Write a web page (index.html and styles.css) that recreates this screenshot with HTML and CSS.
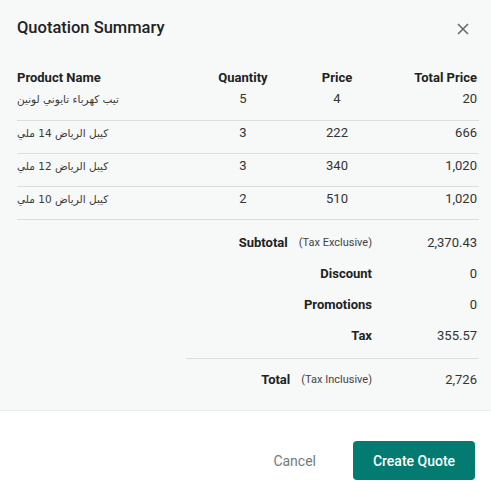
FILE: index.html
```html
<!DOCTYPE html>
<html>
<head>
<meta charset="utf-8">
<link rel="stylesheet" href="styles.css">
</head>
<body>
<div class="dialog">
  <div class="body">
    <div class="head">
      <h1 class="title">Quotation Summary</h1>
      <button class="close" aria-label="Close">
        <svg width="12" height="12" viewBox="0 0 12 12"><path d="M1 1L11 11M11 1L1 11" stroke="#666b6b" stroke-width="1.6" fill="none"/></svg>
      </button>
    </div>
    <div class="table">
      <div class="row hdr">
        <div class="c name">Product Name</div>
        <div class="c mid">Quantity</div>
        <div class="c mid">Price</div>
        <div class="c end">Total Price</div>
      </div>
      <div class="row">
        <div class="c name" dir="rtl">تيب كهرباء تايوني لونين</div>
        <div class="c mid">5</div>
        <div class="c mid">4</div>
        <div class="c end">20</div>
      </div>
      <div class="row">
        <div class="c name" dir="rtl">كيبل الرياض 14 ملي</div>
        <div class="c mid">3</div>
        <div class="c mid">222</div>
        <div class="c end">666</div>
      </div>
      <div class="row">
        <div class="c name" dir="rtl">كيبل الرياض 12 ملي</div>
        <div class="c mid">3</div>
        <div class="c mid">340</div>
        <div class="c end">1,020</div>
      </div>
      <div class="row">
        <div class="c name" dir="rtl">كيبل الرياض 10 ملي</div>
        <div class="c mid">2</div>
        <div class="c mid">510</div>
        <div class="c end">1,020</div>
      </div>
    </div>
    <div class="summary">
      <div class="srow"><div class="lab"><b>Subtotal</b><span class="note">(Tax Exclusive)</span></div><div class="val">2,370.43</div></div>
      <div class="srow"><div class="lab"><b>Discount</b></div><div class="val">0</div></div>
      <div class="srow"><div class="lab"><b>Promotions</b></div><div class="val">0</div></div>
      <div class="srow"><div class="lab"><b>Tax</b></div><div class="val">355.57</div></div>
      <div class="srow total"><div class="lab"><b>Total</b><span class="note">(Tax Inclusive)</span></div><div class="val">2,726</div></div>
    </div>
  </div>
  <div class="foot">
    <button class="cancel">Cancel</button>
    <button class="primary">Create Quote</button>
  </div>
</div>
</body>
</html>
```
FILE: styles.css
```css
html, body { margin: 0; padding: 0; }
body {
  font-family: Roboto, "Noto Sans", "DejaVu Sans", sans-serif;
  color: #333;
  background: #fff;
}
.dialog { width: 491px; height: 500px; display: flex; flex-direction: column; }
.body {
  background: #f7f8f8;
  height: 411px;
  box-sizing: border-box;
  padding: 18px 12px 0 17px;
  border-bottom: 1px solid #eceeee;
}
.head { display: flex; justify-content: space-between; align-items: center; height: 20px; }
.title { margin: 0; font-size: 16.5px; line-height: 20px; font-weight: 500; color: #222; }
.close { border: 0; background: none; padding: 0; width: 12px; height: 12px; margin-right: 10px; margin-top: 2px; display: flex; }
.table { margin-top: 32px; }
.row {
  display: grid;
  grid-template-columns: 179px 94px 94px 1fr;
  padding: 4px 2px 12px 0;
  border-bottom: 1px solid #d9dfdf;
  font-size: 13px;
  line-height: 16px;
}
.row.hdr { padding: 0 2px 0 0; border-bottom: 0; font-weight: 700; color: #222; }
.row.hdr + .row { padding-top: 5px; padding-bottom: 13px; }
.c.name { text-align: left; font-family: "DejaVu Sans", "Noto Sans", sans-serif; font-size: 10.5px; color: #3a3a3a; }
.hdr .c.name { font-family: Roboto, sans-serif; font-size: 13px; color: #222; }
.c.mid { text-align: center; }
.c.end { text-align: right; }
.summary { margin: 8px 0 0 169px; }
.srow {
  display: grid;
  grid-template-columns: 1fr 105px;
  padding: 7px 2px 8px 0;
  font-size: 13px;
  line-height: 16px;
  height: 16px;
}
.lab { display: flex; justify-content: flex-end; align-items: center; height: 16px; color: #222; }
.lab b { font-weight: 700; }
.note { font-size: 11px; color: #444; margin-left: 11px; }
.val { text-align: right; }
.srow.total { border-top: 1px solid #d9dfdf; margin-top: 6px; padding-top: 13px; }
.foot {
  flex: 1;
  display: flex;
  justify-content: flex-end;
  align-items: flex-start;
  padding: 30px 16px 0 0;
  gap: 37px;
}
.cancel {
  border: 0; background: none; padding: 0;
  font-family: Roboto, sans-serif; font-size: 14px; color: #6f7c7c;
  height: 39px;
}
.primary {
  border: 0; border-radius: 4px;
  background: #037b70; color: #fff;
  font-family: Roboto, sans-serif; font-size: 14px; font-weight: 500;
  width: 122px; height: 39px;
}
```
